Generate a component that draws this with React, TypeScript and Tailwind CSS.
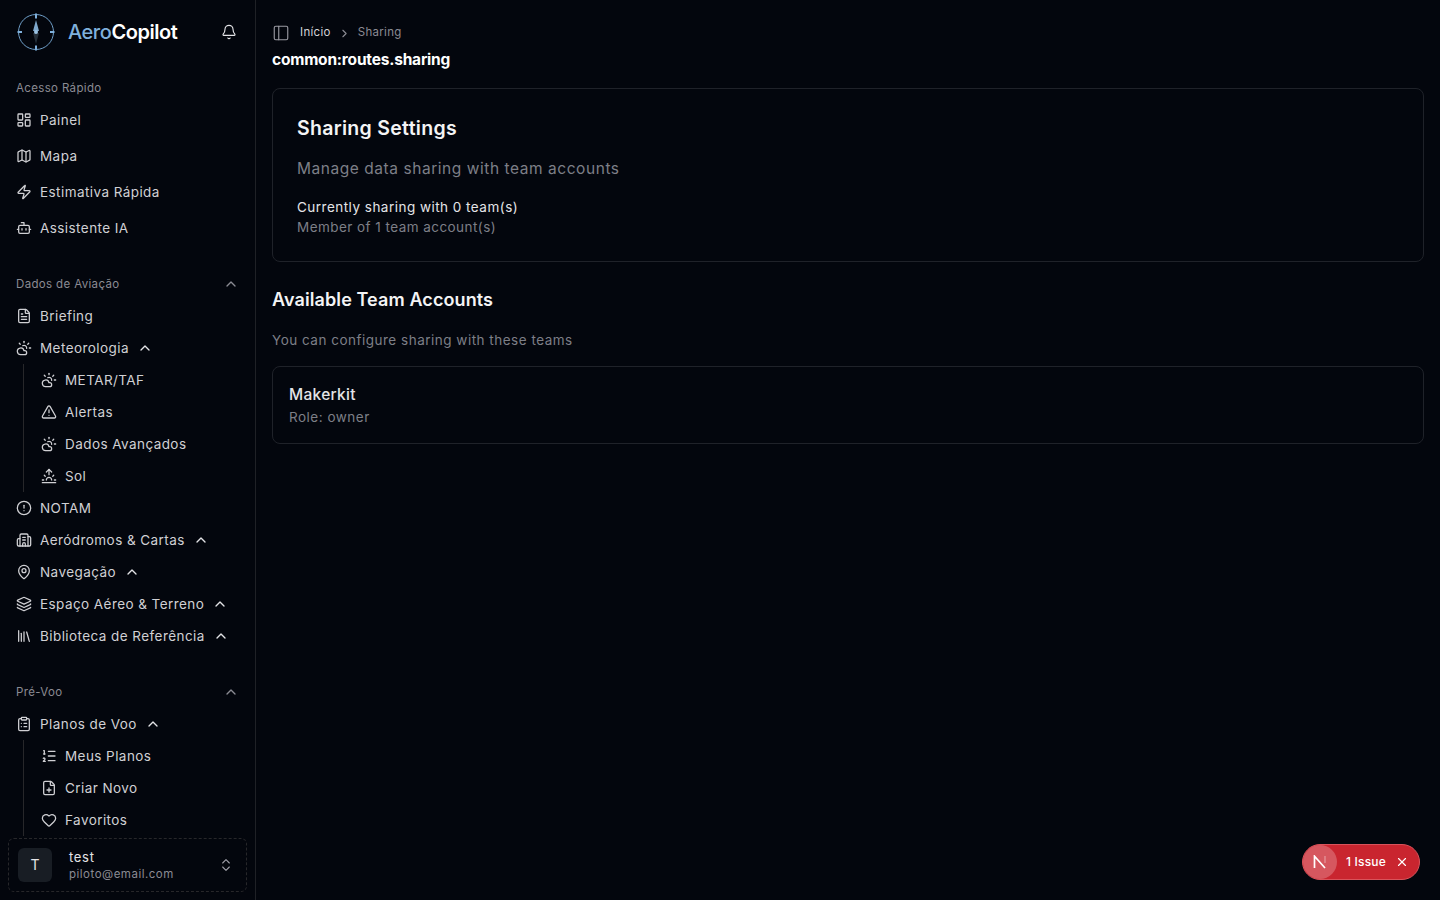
import type { ReactNode } from "react";
import {
  Bell,
  Bot,
  Building2,
  ChevronRight,
  ChevronUp,
  ChevronsUpDown,
  CircleAlert,
  ClipboardList,
  CloudSun,
  FilePlus,
  FileText,
  Heart,
  Layers,
  LayoutDashboard,
  Library,
  ListOrdered,
  Map,
  MapPin,
  PanelLeft,
  Sunrise,
  TriangleAlert,
  X,
  Zap,
} from "lucide-react";

function Logo() {
  return (
    <svg width="38" height="38" viewBox="0 0 38 38" fill="none" className="shrink-0">
      <circle cx="19" cy="19" r="17.5" stroke="#6f9fc9" strokeWidth="1" />
      <path d="M19 0.5v5M19 32.5v5M0.5 19h4.5M33 19h4.5" stroke="#7fb0dc" strokeWidth="2" />
      <path d="M19 7l3 11h-6z" fill="#7fa8cc" />
      <path d="M19 31l3-11h-6z" fill="#26303a" />
      <circle cx="19" cy="19" r="2" fill="#9cc4e4" />
    </svg>
  );
}

function Item({ icon, label, open, h = "h-8" }: { icon: ReactNode; label: string; open?: boolean; h?: string }) {
  return (
    <div className={`${h} flex items-center gap-2 text-[#d0d0d4]`}>
      <span className="w-4 h-4 flex items-center justify-center shrink-0">{icon}</span>
      <span className="text-[13.5px] tracking-[0.43px] whitespace-nowrap">{label}</span>
      {open && <ChevronUp size={16} className="text-[#e4e4e7]" />}
    </div>
  );
}

function SectionLabel({ label, toggle, h = "h-8" }: { label: string; toggle?: boolean; h?: string }) {
  return (
    <div className={`${h} flex items-center justify-between pr-2 text-[#8b8b93]`}>
      <span className="pt-0.5 text-[11.5px] tracking-[0.35px]">{label}</span>
      {toggle && <ChevronUp size={16} />}
    </div>
  );
}

function SubList({ children }: { children: ReactNode }) {
  return <div className="ml-[7px] pl-[17px] border-l border-[#27272a]">{children}</div>;
}

const ic = { size: 16, strokeWidth: 1.9 };

export default function App() {
  return (
    <div className="h-[900px] w-[1440px] flex overflow-hidden bg-[#03060d] font-['Inter',sans-serif]">
      <aside className="w-[256px] h-full shrink-0 border-r border-[#1f2126] flex flex-col relative">
        <div className="h-[64px] shrink-0 flex items-center pl-[17px] pr-[18px]">
          <Logo />
          <span className="ml-[13px] text-[20px] font-medium tracking-[-0.45px] text-[#7fb0dc]">
            Aero<span className="text-white font-semibold">Copilot</span>
          </span>
          <Bell size={16} strokeWidth={1.7} className="ml-auto text-[#e4e4e7]" />
        </div>

        <nav className="flex-1 overflow-hidden pl-4 pr-2 pt-[10px]">
          <SectionLabel h="h-7" label="Acesso Rápido" />
          <Item h="h-9" icon={<LayoutDashboard {...ic} />} label="Painel" />
          <Item h="h-9" icon={<Map {...ic} />} label="Mapa" />
          <Item h="h-9" icon={<Zap {...ic} />} label="Estimativa Rápida" />
          <Item h="h-9" icon={<Bot {...ic} />} label="Assistente IA" />

          <div className="mt-[22px]">
            <SectionLabel label="Dados de Aviação" toggle />
            <Item icon={<FileText {...ic} />} label="Briefing" />
            <Item icon={<CloudSun {...ic} />} label="Meteorologia" open />
            <SubList>
              <Item icon={<CloudSun {...ic} />} label="METAR/TAF" />
              <Item icon={<TriangleAlert {...ic} />} label="Alertas" />
              <Item icon={<CloudSun {...ic} />} label="Dados Avançados" />
              <Item icon={<Sunrise {...ic} />} label="Sol" />
            </SubList>
            <Item icon={<CircleAlert {...ic} />} label="NOTAM" />
            <Item icon={<Building2 {...ic} />} label="Aeródromos & Cartas" open />
            <Item icon={<MapPin {...ic} />} label="Navegação" open />
            <Item icon={<Layers {...ic} />} label="Espaço Aéreo & Terreno" open />
            <Item icon={<Library {...ic} />} label="Biblioteca de Referência" open />
          </div>

          <div className="mt-6">
            <SectionLabel label="Pré-Voo" toggle />
            <Item icon={<ClipboardList {...ic} />} label="Planos de Voo" open />
            <SubList>
              <Item icon={<ListOrdered {...ic} />} label="Meus Planos" />
              <Item icon={<FilePlus {...ic} />} label="Criar Novo" />
              <Item icon={<Heart {...ic} />} label="Favoritos" />
            </SubList>
          </div>
        </nav>

        <div className="absolute left-2 right-2 bottom-2 h-[54px] bg-[#03060d] rounded-md border border-dashed border-[#27272a] flex items-center pl-[9px] pr-3">
          <div className="w-[34px] h-[34px] rounded-md bg-[#181d24] flex items-center justify-center text-[#e4e4e7] text-sm">
            T
          </div>
          <div className="ml-[17px] pt-[2px] flex flex-col leading-none">
            <span className="text-[13px] tracking-[0.7px] text-[#e4e4e7]">test</span>
            <span className="mt-[5px] text-[11.5px] tracking-[0.5px] text-[#8b8b93]">piloto@email.com</span>
          </div>
          <ChevronsUpDown size={16} strokeWidth={1.6} className="ml-auto text-[#a1a1aa]" />
        </div>
      </aside>

      <main className="flex-1 min-w-0 px-4 pt-[23px]">
        <div className="h-5 flex items-center">
          <PanelLeft size={18} strokeWidth={1.5} className="text-[#9a9aa2]" />
          <span className="ml-[10px] text-[11.5px] tracking-[0.3px] text-[#d4d4d8]">Início</span>
          <ChevronRight size={13} className="mx-[7px] text-[#8b8b93]" />
          <span className="text-[11.5px] tracking-[0.3px] text-[#8b8b93]">Sharing</span>
        </div>
        <h1 className="mt-[7px] text-[15.5px] leading-5 font-bold tracking-[-0.2px] text-white">common:routes.sharing</h1>

        <section className="mt-[18px] h-[174px] rounded-lg border border-[#1f2229] px-6 pt-[25px]">
          <h2 className="text-[19.5px] leading-7 font-semibold tracking-[0.3px] text-[#f4f4f5]">Sharing Settings</h2>
          <p className="mt-[17px] text-[15.5px] leading-5 tracking-[0.55px] text-[#7d7f87]">Manage data sharing with team accounts</p>
          <p className="mt-[18px] text-[13.5px] leading-5 tracking-[0.48px] text-[#e4e4e7]">Currently sharing with 0 team(s)</p>
          <p className="text-[13.5px] leading-5 tracking-[0.45px] text-[#7d7f87]">Member of 1 team account(s)</p>
        </section>

        <h2 className="mt-[24px] text-[18px] leading-7 font-semibold tracking-[0.1px] text-[#f4f4f5]">Available Team Accounts</h2>
        <p className="mt-[16px] text-[13.5px] leading-5 tracking-[0.5px] text-[#7d7f87]">You can configure sharing with these teams</p>

        <section className="mt-[16px] h-[78px] rounded-lg border border-[#1f2229] px-4 pt-[18px]">
          <p className="text-[15.5px] leading-5 font-medium tracking-[0.3px] text-[#e4e4e7]">Makerkit</p>
          <p className="mt-[2px] text-[13.5px] leading-5 tracking-[0.5px] text-[#7d7f87]">Role: owner</p>
        </section>
      </main>

      <div className="fixed right-5 bottom-5 h-9 w-[118px] rounded-full bg-[#c9252f] border border-[#d9535b] flex items-center pr-[10px] text-white">
        <div className="w-[34px] h-[34px] rounded-full bg-[#d6575f] flex items-center justify-center">
          <svg width="14" height="14" viewBox="0 0 14 14" fill="none">
            <path d="M1.5 13V1.2L12 13" stroke="white" strokeWidth="1.7" />
            <path d="M12 1v7" stroke="white" strokeOpacity="0.4" strokeWidth="1.2" />
          </svg>
        </div>
        <span className="ml-[9px] text-[12px] font-medium tracking-[0.2px]">1 Issue</span>
        <X size={14} className="ml-auto" />
      </div>
    </div>
  );
}
